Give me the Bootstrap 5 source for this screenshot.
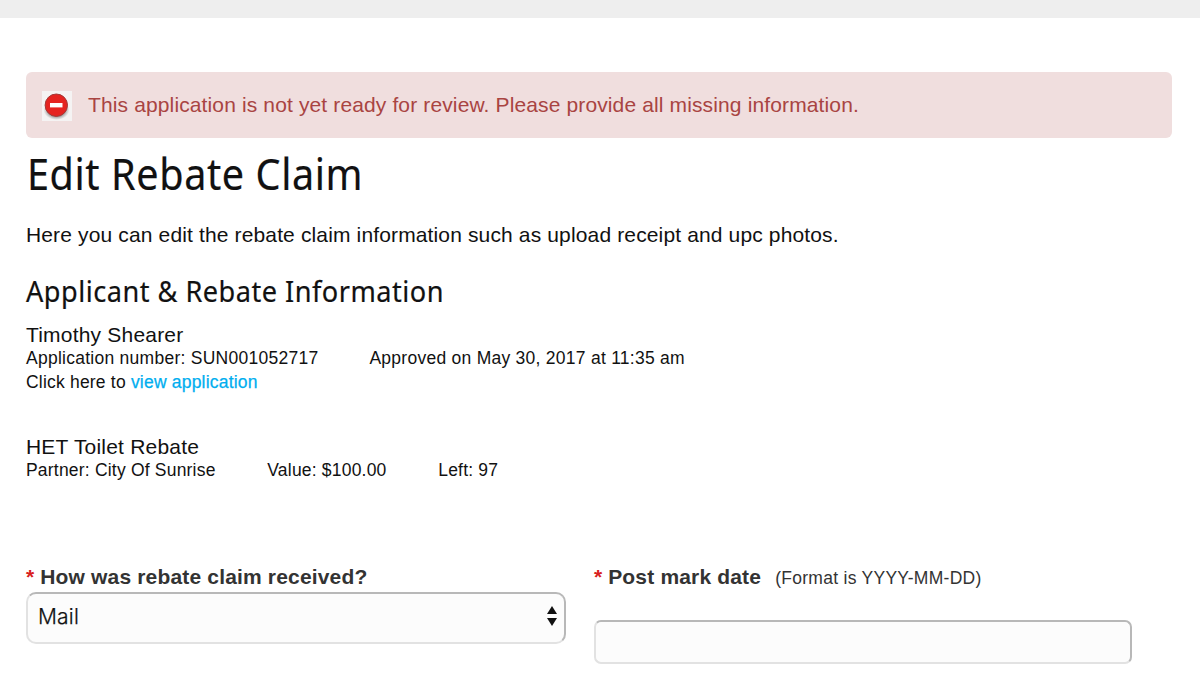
<!DOCTYPE html>
<html lang="en">
<head>
<meta charset="utf-8">
<title>Edit Rebate Claim</title>
<link href="https://cdn.jsdelivr.net/npm/bootstrap@5.3.0/dist/css/bootstrap.min.css" rel="stylesheet">
<style>
body{font-family:"Liberation Sans",Arial,sans-serif;font-size:21px;color:#111;background:#fff;overflow:hidden}
.topbar{height:18px;background:#eee}
.page{padding:54px 28px 0 26px}
.notice{height:66px;background:#f0dede;color:#a94442;border-radius:6px;padding:0 16px;gap:16px;letter-spacing:.13px}
.notice svg{margin-top:2px}
h1,h2{font-family:"Noto Sans","Open Sans",sans-serif;font-weight:400;white-space:nowrap}
h1 span,h2 span{display:inline-block;transform:scaleX(.92);transform-origin:0 0;-webkit-text-stroke:.2px #111}
h1{font-size:43px;line-height:60px;margin:6px 0 16px;padding-left:.5px;letter-spacing:.65px}
h2{font-size:29.5px;line-height:40px;margin:21px 0 12px;letter-spacing:.53px}
.intro{line-height:30px;letter-spacing:.14px}
.who{line-height:23px;letter-spacing:.2px}
.facts{font-size:17.5px;line-height:24px;gap:51px;letter-spacing:.26px}
.facts.tight{gap:51.7px;letter-spacing:.2px}
.facts a{color:#00aeef;-webkit-text-stroke:.25px #00aeef}
.offer{margin-top:41px}
.fields{margin-top:80px;gap:28px}
.field{width:540px}
.field label{line-height:30px;color:#333;font-weight:700;letter-spacing:.17px;white-space:nowrap}
.req{color:#d82020;letter-spacing:0}
.hint{font-size:17.5px;font-weight:400;margin-left:8px;letter-spacing:.28px}
.box{border:2px solid;border-color:#b8b8b8 #b8b8b8 #e2e2e2 #e2e2e2;background:#fcfcfc}
.pick{height:52px;border-radius:10px;padding:0 7px 3px 10px}
.pick span{font-family:Inter,sans-serif;font-size:21px;font-weight:300;letter-spacing:.2px;-webkit-text-stroke:.25px #111}
.pick svg{margin-bottom:1px}
.entry{display:block;width:538px;height:44px;border-radius:7px;margin-top:27px}
</style>
</head>
<body>
<div class="topbar"></div>
<main class="page">
  <div class="notice d-flex align-items-center" role="alert">
    <svg width="30" height="30" viewBox="0 0 30 30">
      <defs><radialGradient id="sh"><stop offset=".5" stop-color="#444" stop-opacity=".8"/><stop offset="1" stop-color="#777" stop-opacity="0"/></radialGradient></defs>
      <path fill="#f5f3f3" d="M0 0h30v30H0z"/>
      <ellipse cx="14.5" cy="19" rx="13" ry="10" fill="url(#sh)"/>
      <circle cx="14.3" cy="14.2" r="11.2" fill="#e52421" stroke="#a13a38"/>
      <path fill="#fff" d="M8 12h12.5v4.4H8z"/>
    </svg>
    <span class="notice-text">This application is not yet ready for review. Please provide all missing information.</span>
  </div>
  <h1><span>Edit Rebate Claim</span></h1>
  <p class="intro mb-0">Here you can edit the rebate claim information such as upload receipt and upc photos.</p>
  <h2><span>Applicant &amp; Rebate Information</span></h2>
  <section>
    <div class="who">Timothy Shearer</div>
    <div class="facts d-flex"><span>Application number: SUN001052717</span><span>Approved on May 30, 2017 at 11:35 am</span></div>
    <div class="facts tight">Click here to <a href="#" class="text-decoration-none">view application</a></div>
  </section>
  <section class="offer">
    <div class="who">HET Toilet Rebate</div>
    <div class="facts tight d-flex"><span>Partner: City Of Sunrise</span><span>Value: $100.00</span><span>Left: 97</span></div>
  </section>
  <form class="fields d-flex">
    <div class="field">
      <label class="d-block"><span class="req">*</span> How was rebate claim received?</label>
      <div class="box pick d-flex align-items-center justify-content-between"><span>Mail</span>
        <svg width="10" height="20" viewBox="0 0 10 20" fill="#111"><path d="M5 0l5 8H0zM0 12h10l-5 8z"/></svg>
      </div>
    </div>
    <div class="field">
      <label class="d-block" for="postmark"><span class="req">*</span> Post mark date <span class="hint">(Format is YYYY-MM-DD)</span></label>
      <input id="postmark" class="box entry" type="text">
    </div>
  </form>
</main>
<script src="https://cdn.jsdelivr.net/npm/bootstrap@5.3.0/dist/js/bootstrap.bundle.min.js"></script>
</body>
</html>
